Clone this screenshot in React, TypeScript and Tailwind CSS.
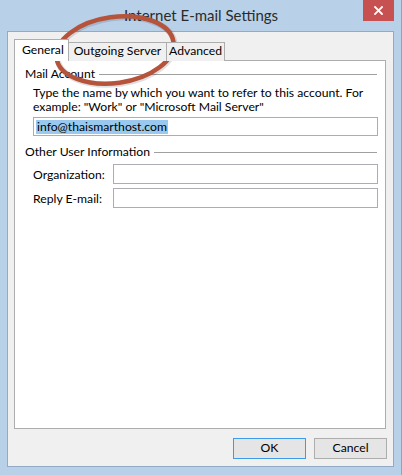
import React from "react";

function SectionHeader({ label }: { label: string }) {
  return (
    <div className="flex items-center h-[15px] pr-[8px]">
      <span className="leading-[15px] whitespace-nowrap">{label}</span>
      <div className="flex-1 h-px bg-[#a0a0a0] ml-[4px] mt-[1px]" />
    </div>
  );
}

export default function App() {
  return (
    <div className="relative w-[402px] h-[475px] bg-[#b9d0e9] flex flex-col overflow-hidden border-r border-[#8fa6bf] font-['Lato','Noto_Sans',sans-serif] text-[12.2px] text-black">
      {/* Title bar */}
      <div className="relative h-[31px] flex items-center justify-center">
        <span className="text-[15px] text-[#2b2b2b] leading-none -mt-[1px] pl-[1px]">Internet E-mail Settings</span>
        <div className="absolute top-0 left-[363px] w-[31px] h-[21px] bg-[#c75050] flex items-center justify-center">
          <svg width="9" height="9" viewBox="0 0 9 9">
            <path d="M1 1 L8 8 M8 1 L1 8" stroke="#ffffff" strokeWidth="1.8" strokeLinecap="square" />
          </svg>
        </div>
      </div>

      {/* Client area */}
      <div className="ml-[7px] mr-[7px] h-[436px] bg-[#f0f0f0] border border-[#93aac6] pl-[6px] pt-[7px] flex flex-col">
        {/* Tabs */}
        <div className="relative z-10 flex items-end h-[22px] -mb-px">
          <div className="w-[55px] h-[22px] bg-white border-t border-l border-r border-[#adadad] flex items-center pl-[7px] pb-[1px]">
            General
          </div>
          <div className="-ml-px w-[99px] h-[19px] bg-[#f0f0f0] border-t border-l border-r border-[#adadad] flex items-center justify-center pb-[1px]">
            Outgoing Server
          </div>
          <div className="-ml-px w-[59px] h-[19px] bg-[#f0f0f0] border-t border-l border-r border-[#adadad] flex items-center justify-center pb-[1px]">
            Advanced
          </div>
        </div>

        {/* Tab panel */}
        <div className="w-[372px] h-[369px] bg-white border border-[#adadad] pl-[10px] pt-[5px] flex flex-col">
          <SectionHeader label="Mail Account" />
          <div className="pl-[8px] pr-[7px] mt-[5px]">
            <div className="leading-[14px] whitespace-nowrap">
              Type the name by which you want to refer to this account. For
              <br />
              example: "Work" or "Microsoft Mail Server"
            </div>
            <div className="mt-[3px] h-[19px] border border-[#abadb3] bg-white flex items-center pl-[2px]">
              <span className="bg-[#99c9ef] leading-[14px] h-[14px] px-[1px]">info@thaismarthost.com</span>
            </div>
          </div>

          <div className="mt-[8px]">
            <SectionHeader label="Other User Information" />
          </div>
          <div className="pl-[8px] pr-[7px] mt-[5px] flex flex-col gap-[4px]">
            <div className="flex items-center h-[20px]">
              <span className="w-[80px] leading-[14px] pt-[1px]">Organization:</span>
              <div className="flex-1 h-[20px] border border-[#abadb3] bg-white" />
            </div>
            <div className="flex items-center h-[20px]">
              <span className="w-[80px] leading-[14px] pt-[1px]">Reply E-mail:</span>
              <div className="flex-1 h-[20px] border border-[#abadb3] bg-white" />
            </div>
          </div>
        </div>

        {/* Buttons */}
        <div className="flex justify-end gap-[8px] mt-[9px] w-[373px]">
          <button className="w-[73px] h-[21px] bg-[#e5e5e5] border border-[#3d9be9] flex items-center justify-center leading-none">
            OK
          </button>
          <button className="w-[73px] h-[21px] bg-[#e5e5e5] border border-[#adadad] flex items-center justify-center leading-none">
            Cancel
          </button>
        </div>
      </div>

      {/* Red annotation ellipse */}
      <svg className="absolute left-0 top-0 pointer-events-none" width="402" height="475" viewBox="0 0 402 475">
        <ellipse cx="116" cy="51" rx="59" ry="33" transform="rotate(-8 116 51)" fill="none" stroke="#000000" strokeOpacity="0.12" strokeWidth="6" />
        <ellipse cx="115" cy="50" rx="59" ry="33" transform="rotate(-8 115 50)" fill="none" stroke="#b5533b" strokeWidth="4.5" />
      </svg>
    </div>
  );
}
